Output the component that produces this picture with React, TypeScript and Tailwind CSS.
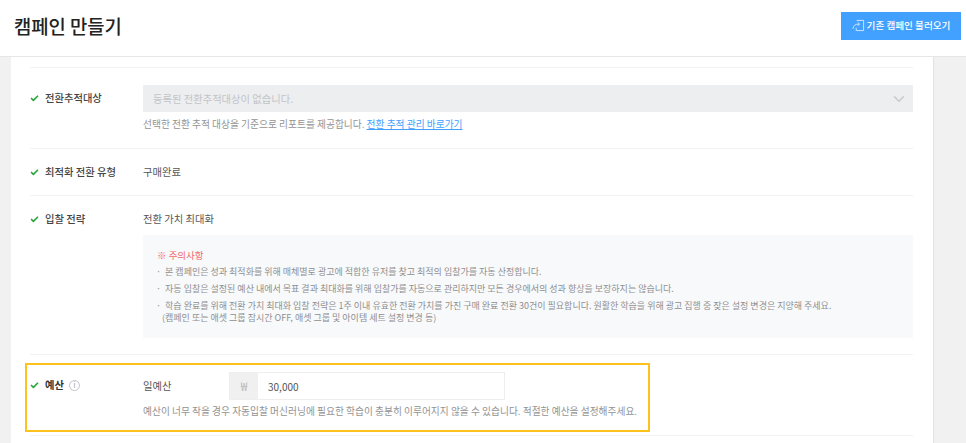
import { Check, ChevronDown } from "lucide-react";

const notices = [
  "본 캠페인은 성과 최적화를 위해 매체별로 광고에 적합한 유저를 찾고 최적의 입찰가를 자동 산정합니다.",
  "자동 입찰은 설정된 예산 내에서 목표 결과 최대화를 위해 입찰가를 자동으로 관리하지만 모든 경우에서의 성과 향상을 보장하지는 않습니다.",
  "학습 완료를 위해 전환 가치 최대화 입찰 전략은 1주 이내 유효한 전환 가치를 가진 구매 완료 전환 30건이 필요합니다. 원활한 학습을 위해 광고 집행 중 잦은 설정 변경은 지양해 주세요.",
];

function RowLabel({ children }: { children: React.ReactNode }) {
  return (
    <div className="flex h-[16px] w-[113px] shrink-0 items-center gap-[6px] text-[10.3px] font-medium leading-[16px] text-[#444]">
      <Check className="h-[9px] w-[9px] shrink-0 text-[#2aa63e]" strokeWidth={4.5} />
      {children}
    </div>
  );
}

export default function App() {
  return (
    <div
      className="flex h-[443px] w-[966px] flex-col overflow-hidden bg-[#f1f1f1]"
      style={{ fontFamily: '"Noto Sans CJK KR", "Noto Sans", sans-serif' }}
    >
      <header className="flex h-[57px] shrink-0 items-start justify-between border-b border-[#e6e6e6] bg-white pl-[14px] pr-[5px]">
        <h1 className="mt-[12px] text-[18.8px] font-medium leading-[28px] text-[#222]">캠페인 만들기</h1>
        <button className="mt-[12px] flex h-[28px] w-[120px] items-center justify-center gap-[2px] bg-[#42a0ff] pb-[1px] text-[9.6px] font-medium text-white">
          <svg viewBox="0 0 14 14" className="h-[13px] w-[13px]" fill="none" stroke="#d5ebff" strokeWidth="1">
            <path d="M1 10.5C1.5 7 3.5 5.5 7.5 5.5" />
            <path d="M6 3.5 8.2 5.5 6 7.5" />
            <path d="M5 1.5H12.5V12.5H4.5V9.5" />
          </svg>
          기존 캠페인 불러오기
        </button>
      </header>

      <main className="ml-[11px] mr-[32px] min-h-0 flex-1 border-r border-[#e3e3e3] bg-white pl-[19px] pr-[20px] pt-[10px]">
        <div className="h-px bg-[#f2f2f2]" />

        <section className="flex border-b border-[#f2f2f2] pb-[16px] pt-[17px]">
          <div className="pt-[5px]">
            <RowLabel>전환추적대상</RowLabel>
          </div>
          <div className="min-w-0 flex-1">
            <div className="flex h-[27px] items-center justify-between bg-[#edeef0] pl-[10px] pr-[5px] text-[10.3px] text-[#c2c4c6]">
              <span>등록된 전환추적대상이 없습니다.</span>
              <ChevronDown className="h-[18px] w-[18px] text-[#c8cacc]" strokeWidth={2} />
            </div>
            <p className="mt-[4px] text-[9.72px] leading-[16px] text-[#939393]">
              선택한 전환 추적 대상을 기준으로 리포트를 제공합니다.{" "}
              <a className="text-[#42a0ff] underline">전환 추적 관리 바로가기</a>
            </p>
          </div>
        </section>

        <section className="flex h-[47px] items-center border-b border-[#f2f2f2]">
          <RowLabel>최적화 전환 유형</RowLabel>
          <span className="text-[10.3px] text-[#555]">구매완료</span>
        </section>

        <section className="flex h-[159px] items-start border-b border-[#f2f2f2] pt-[15px]">
          <RowLabel>입찰 전략</RowLabel>
          <div className="min-w-0 flex-1">
            <p className="h-[16px] text-[10.3px] leading-[16px] text-[#555]">전환 가치 최대화</p>
            <div className="mt-[8px] h-[103px] bg-[#f8f9fb] pl-[13px] pt-[12px] text-[9px] leading-[17px] text-[#8f8f8f]">
              <p className="pl-[1px] text-[9.5px] leading-[16px] text-[#ee6a6a]">※ 주의사항</p>
              <ul>
                {notices.map((notice) => (
                  <li key={notice} className="flex gap-[4px]">
                    <span>·</span>
                    {notice}
                  </li>
                ))}
              </ul>
              <p className="-mt-[5px] pl-[6px]">(캠페인 또는 애셋 그룹 잠시간 OFF, 애셋 그룹 및 아이템 세트 설정 변경 등)</p>
            </div>
          </div>
        </section>

        <section className="relative flex h-[81px] border-b border-[#f2f2f2] pt-[17px]">
          <div className="pt-[5px]">
            <RowLabel>
              <span className="flex items-center gap-[5px] font-bold text-[#333]">
                예산
                <span className="flex h-[11px] w-[11px] items-center justify-center rounded-full border border-[#c4c4c4] text-[8px] font-normal leading-none text-[#aaa]">
                  i
                </span>
              </span>
            </RowLabel>
          </div>
          <div>
            <div className="flex items-center">
              <span className="w-[86px] text-[10.3px] text-[#555]">일예산</span>
              <div className="flex h-[28px] w-[276px] border border-[#eeeeee]">
                <span className="flex w-[28px] items-center justify-center bg-[#f0f0f0] text-[12px] text-[#bbb]">₩</span>
                <span className="flex items-center pl-[10px] text-[10px] text-[#555]">30,000</span>
              </div>
            </div>
            <p className="mt-[3px] whitespace-nowrap text-[9.72px] leading-[16px] text-[#939393]">
              예산이 너무 작을 경우 자동입찰 머신러닝에 필요한 학습이 충분히 이루어지지 않을 수 있습니다. 적절한 예산을 설정해주세요.
            </p>
          </div>
          {/* annotation drawn over the budget row */}
          <div className="pointer-events-none absolute left-[-5px] top-[8px] h-[69px] w-[625px] border-2 border-[#fdc21e]" />
        </section>
      </main>
    </div>
  );
}
